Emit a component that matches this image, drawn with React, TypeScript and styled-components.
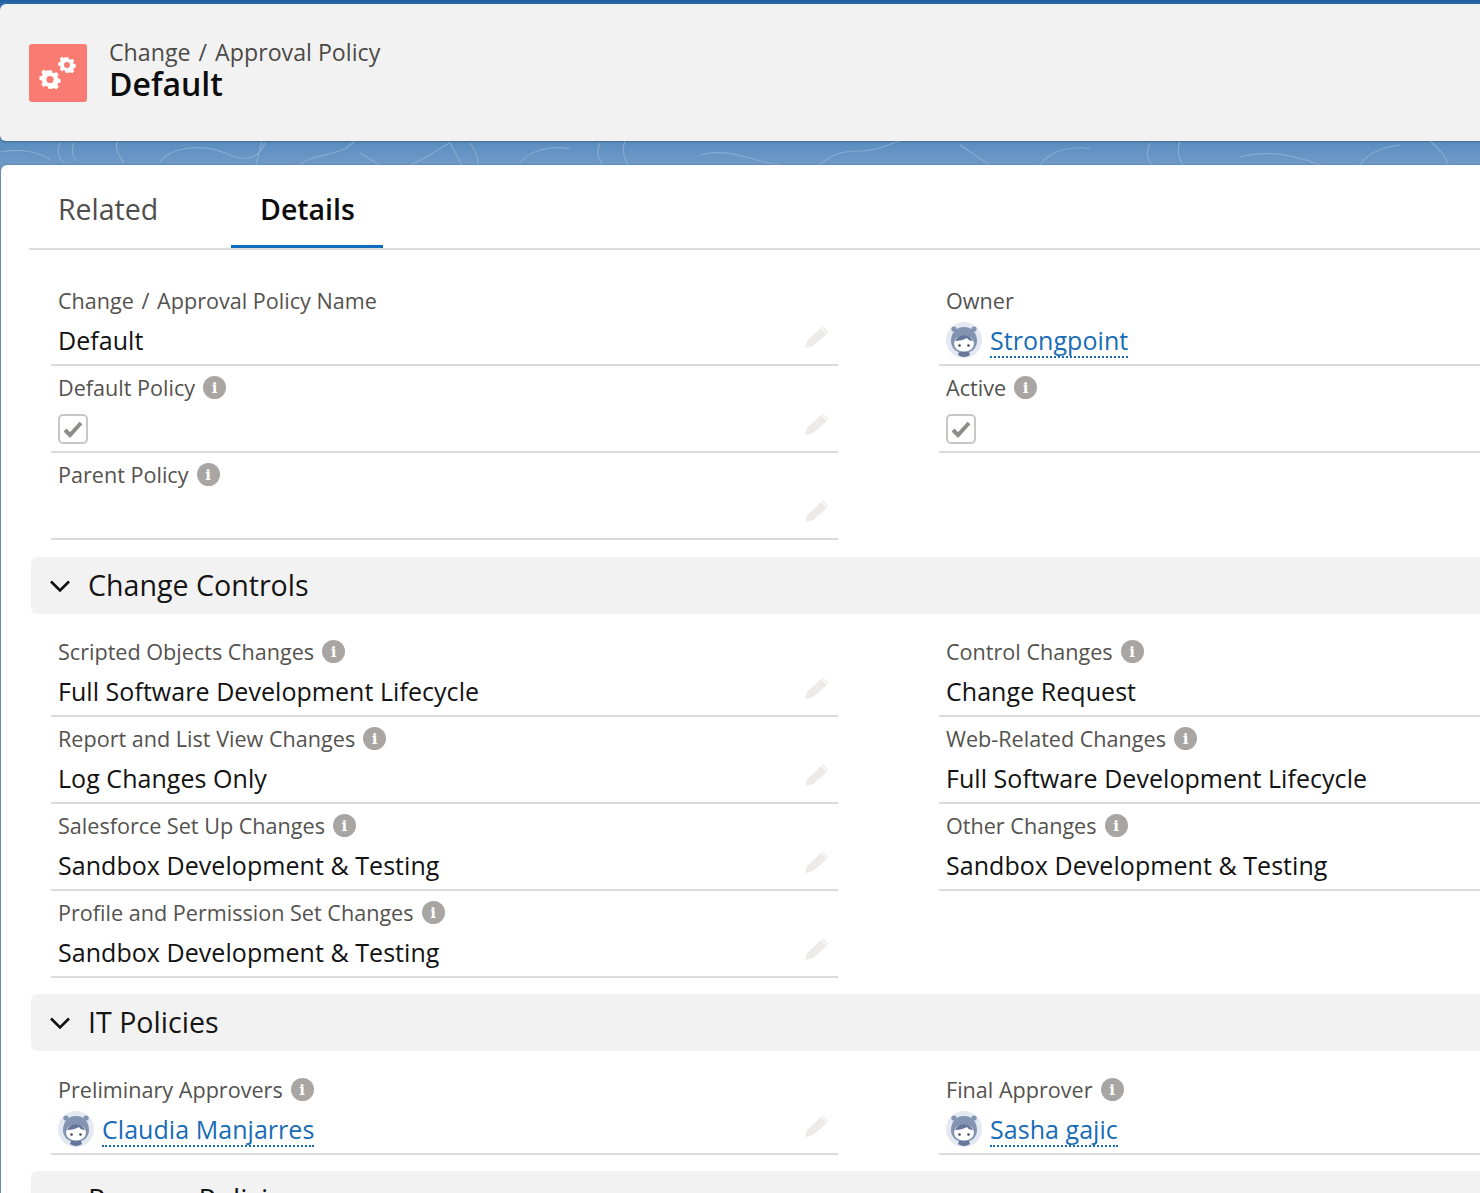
import styled, { createGlobalStyle } from 'styled-components';

const GlobalStyle = createGlobalStyle`
  html, body {
    margin: 0;
    padding: 0;
  }
  body {
    font-family: "Open Sans", "Noto Sans", "Liberation Sans", sans-serif;
    background: #fff;
  }
`;

const Page = styled.div`
  position: relative;
  width: 1480px;
  height: 1193px;
  overflow: hidden;
  padding-top: 4px;
  box-sizing: border-box;
  background: linear-gradient(#1f5f9f 0, #2e6cab 4px, #5a8dc0 141px, #6f9ac8 165px);
`;

/* the topographic lines behind the band between header and body */
const Topo = styled.svg`
  position: absolute;
  left: 0;
  top: 141px;
  width: 1480px;
  height: 24px;
  fill: none;
  stroke: #86abd3;
  stroke-width: 1.2;
`;

const Header = styled.header`
  position: relative;
  display: flex;
  align-items: center;
  gap: 22px;
  height: 137px;
  margin-right: -8px;
  padding-left: 29px;
  box-sizing: border-box;
  background: #f3f2f2;
  border-radius: 6px;
  box-shadow: 0 1px 2px rgba(0, 0, 0, 0.25);
`;

const RecordIcon = styled.div`
  display: flex;
  align-items: center;
  justify-content: center;
  width: 58px;
  height: 58px;
  background: #fa7b71;
  border-radius: 3px;
`;

const HeaderText = styled.div`
  display: flex;
  flex-direction: column;
  margin-bottom: 6px;
`;

const ObjectName = styled.div`
  font-size: 23.2px;
  line-height: 28px;
  color: #4b4a48;
`;

const Slash = styled.span`
  margin: 0 2px;
`;

const RecordName = styled.h1`
  margin: 0;
  font-size: 32px;
  line-height: 36px;
  font-weight: 600;
  color: #0c0c0c;
`;

const Body = styled.main`
  position: relative;
  margin-top: 24px;
  margin-left: 1px;
  margin-right: -8px;
  height: 1040px;
  background: #fff;
  border-radius: 6px 6px 0 0;
  box-shadow: 0 0 2px rgba(0, 0, 0, 0.3);
`;

const Tabs = styled.nav`
  display: flex;
  margin-left: 28px;
  height: 85px;
  border-bottom: 2px solid #dddbda;
  box-sizing: border-box;
`;

const Tab = styled.div<{ $active?: boolean }>`
  display: flex;
  align-items: center;
  width: ${p => (p.$active ? '152px' : '202px')};
  padding-left: 29px;
  padding-top: ${p => (p.$active ? '7px' : '4px')};
  box-sizing: border-box;
  height: 83px;
  font-size: 28.5px;
  font-weight: ${p => (p.$active ? 600 : 400)};
  color: ${p => (p.$active ? '#0c0c0c' : '#4f4e4c')};
  border-bottom: ${p => (p.$active ? '3px solid #0f6cbd' : 'none')};
`;

const Content = styled.div`
  padding-left: 30px;
`;

const FieldGrid = styled.div<{ $top: number; $bottom: number }>`
  display: grid;
  grid-template-columns: 787px 787px;
  column-gap: 101px;
  grid-auto-rows: 87px;
  margin-left: 20px;
  padding-top: ${p => p.$top}px;
  padding-bottom: ${p => p.$bottom}px;
`;

const Field = styled.div`
  display: flex;
  flex-direction: column;
  padding: 0 7px;
  box-sizing: border-box;
  height: 87px;
  border-bottom: 2px solid #dddbda;
`;

const Label = styled.div`
  display: flex;
  align-items: center;
  gap: 8px;
  height: 24px;
  margin-top: 9px;
  font-size: 21.6px;
  color: #54524f;
`;

const ValueRow = styled.div`
  display: flex;
  align-items: center;
  justify-content: space-between;
  height: 38px;
  margin-top: 9px;
`;

const Value = styled.div`
  display: flex;
  align-items: center;
  gap: 8px;
  font-size: 25px;
  letter-spacing: 0.05px;
  color: #121212;
`;

const PersonLink = styled.a`
  color: #176cb5;
  font-size: 25px;
  text-decoration: none;
  border-bottom: 2px dotted #176cb5;
  line-height: 31px;
  margin-top: 2px;
`;

const Info = styled.span`
  display: inline-flex;
  align-items: center;
  justify-content: center;
  width: 23px;
  height: 23px;
  margin-top: 1px;
  border-radius: 50%;
  background: #a8a5a2;
  color: #fff;
  font-family: "DejaVu Serif", serif;
  font-size: 15px;
  font-weight: 700;
`;

const Checkbox = styled.span`
  display: flex;
  align-items: center;
  justify-content: center;
  width: 30px;
  height: 30px;
  margin-top: 4px;
  box-sizing: border-box;
  border: 2px solid #c9c7c5;
  border-radius: 5px;
  background: #fff;
`;

const PencilSvg = styled.svg`
  margin-right: 1px;
  margin-bottom: 6px;
`;

const Section = styled.div`
  display: flex;
  align-items: center;
  gap: 16px;
  height: 57px;
  padding-left: 17px;
  background: #f3f2f2;
  border-radius: 6px 0 0 6px;
  color: #151515;
`;

const SectionTitle = styled.span`
  font-size: 28.6px;
  margin-bottom: 3px;
`;

function PencilIcon() {
  return (
    <PencilSvg width="26" height="24" viewBox="0 0 26 24">
      <path d="M1 23l2-7L17 3l6 6L9 21z" fill="#ecebea" />
      <path d="M19 1.500l5.500 5.500-1 1-5.500-5.500z" fill="#ecebea" />
    </PencilSvg>
  );
}

function CheckIcon() {
  return (
    <Checkbox>
      <svg width="20" height="18" viewBox="0 0 20 18">
        <path d="M2 10l5 5L18 3" fill="none" stroke="#8f8d8a" strokeWidth="4" />
      </svg>
    </Checkbox>
  );
}

function Avatar() {
  return (
    <svg width="36" height="36" viewBox="0 0 36 36">
      <circle cx="18" cy="18" r="18" fill="#e3e8f1" />
      <circle cx="8" cy="7" r="2.600" fill="#8394b2" />
      <circle cx="28" cy="7" r="2.600" fill="#8394b2" />
      <path d="M18 5c8 0 13 6 13 14 0 7-5 12-13 12S5 26 5 19C5 11 10 5 18 5z" fill="#8394b2" />
      <path d="M13 30h10l1 3c-2 1-4 2-6 2s-4-1-6-2z" fill="#65769a" />
      <ellipse cx="18" cy="21.500" rx="10" ry="8" fill="#fff" />
      <path d="M9 19c2-4 5-6 9-6s7 2 9 6c-3 0-5-1-6-3-3 2-8 3-12 3z" fill="#65769a" />
      <circle cx="13.500" cy="23.500" r="1.300" fill="#3f4a5f" />
      <circle cx="22.500" cy="23.500" r="1.300" fill="#3f4a5f" />
    </svg>
  );
}

function Gears() {
  const gear =
    'M-2-9h4l.7 2.800 2.100.9 2.500-1.500 2.800 2.800-1.500 2.500.9 2.100 2.800.7v4l-2.800.7-.9 2.100 1.500 2.500-2.800 2.800-2.500-1.500-2.100.9L2 12.800h-4l-.7-2.800-2.100-.9-2.500 1.500-2.800-2.800 1.500-2.500-.9-2.100-2.800-.7v-4l2.800-.7.9-2.100-1.500-2.500 2.800-2.800 2.500 1.500 2.100-.9z';
  return (
    <svg width="40" height="40" viewBox="0 0 40 40">
      <g transform="translate(12 26.500) scale(0.86)">
        <path d={gear} transform="translate(0 -1.900)" fill="#fff" />
        <circle r="4.200" fill="#fa7b71" />
      </g>
      <g transform="translate(29 12) scale(0.72)">
        <path d={gear} transform="translate(0 -1.900)" fill="#fff" />
        <circle r="4.200" fill="#fa7b71" />
      </g>
    </svg>
  );
}

function Chevron() {
  return (
    <svg width="24" height="24" viewBox="0 0 24 24">
      <path d="M3 7.500l9 9 9-9" fill="none" stroke="#111" strokeWidth="2.600" />
    </svg>
  );
}

type FieldData = {
  label: React.ReactNode;
  info?: boolean;
  value?: string;
  person?: string;
  checked?: boolean;
  editable?: boolean;
};

function FieldCell({ label, info, value, person, checked, editable }: FieldData) {
  return (
    <Field>
      <Label>
        <span>{label}</span>
        {info && <Info>i</Info>}
      </Label>
      <ValueRow>
        <Value>
          {person && <Avatar />}
          {person && <PersonLink>{person}</PersonLink>}
          {value}
          {checked && <CheckIcon />}
        </Value>
        {editable && <PencilIcon />}
      </ValueRow>
    </Field>
  );
}

const FSDL = 'Full Software Development Lifecycle';
const SDT = 'Sandbox Development & Testing';

export default function App() {
  return (
    <Page>
      <GlobalStyle />
      <Topo viewBox="0 0 1480 24">
        <path d="M0 11c20-4 40 0 50 8M60 2c-4 8-2 14 4 20M74 2c-3 6-2 12 2 18M118 0c-4 7 0 12 6 22M160 22c6-14 40-22 70-8 20 8 30 0 35-12M262 0l-6 24M300 24c6-8 30-10 45-16l10-8M360 12l20 12M410 24c20-8 30-18 40-22l12 22M470 2c6 8 8 14 8 22" />
        <path d="M520 22c8-12 30-18 50-14M600 2c-4 8-2 16 3 22M625 0c-3 8-2 14 3 24M700 14c30-8 50 6 80 10M820 24c10-10 20-14 40-14s30-8 40-10M960 4l30 20M1040 24c10-14 30-20 50-16M1150 2c-4 8-3 16 2 22M1180 0c-3 8-2 16 3 24M1240 16c30-8 60 0 80 8M1360 24c6-10 20-18 40-20M1430 0c10 8 16 16 18 24" />
      </Topo>
      <Header>
        <RecordIcon>
          <Gears />
        </RecordIcon>
        <HeaderText>
          <ObjectName>Change <Slash>/</Slash> Approval Policy</ObjectName>
          <RecordName>Default</RecordName>
        </HeaderText>
      </Header>
      <Body>
        <Tabs>
          <Tab>Related</Tab>
          <Tab $active>Details</Tab>
        </Tabs>
        <Content>
          <FieldGrid $top={29} $bottom={17}>
            <FieldCell label={<>Change <Slash>/</Slash> Approval Policy Name</>} value="Default" editable />
            <FieldCell label="Owner" person="Strongpoint" />
            <FieldCell label="Default Policy" info checked editable />
            <FieldCell label="Active" info checked />
            <FieldCell label="Parent Policy" info editable />
          </FieldGrid>
          <Section>
            <Chevron />
            <SectionTitle>Change Controls</SectionTitle>
          </Section>
          <FieldGrid $top={16} $bottom={16}>
            <FieldCell label="Scripted Objects Changes" info value={FSDL} editable />
            <FieldCell label="Control Changes" info value="Change Request" />
            <FieldCell label="Report and List View Changes" info value="Log Changes Only" editable />
            <FieldCell label="Web-Related Changes" info value={FSDL} />
            <FieldCell label="Salesforce Set Up Changes" info value={SDT} editable />
            <FieldCell label="Other Changes" info value={SDT} />
            <FieldCell label="Profile and Permission Set Changes" info value={SDT} editable />
          </FieldGrid>
          <Section>
            <Chevron />
            <SectionTitle>IT Policies</SectionTitle>
          </Section>
          <FieldGrid $top={17} $bottom={16}>
            <FieldCell label="Preliminary Approvers" info person="Claudia Manjarres" editable />
            <FieldCell label="Final Approver" info person="Sasha gajic" />
          </FieldGrid>
          <Section>
            <Chevron />
            <SectionTitle>Process Policies</SectionTitle>
          </Section>
        </Content>
      </Body>
    </Page>
  );
}
